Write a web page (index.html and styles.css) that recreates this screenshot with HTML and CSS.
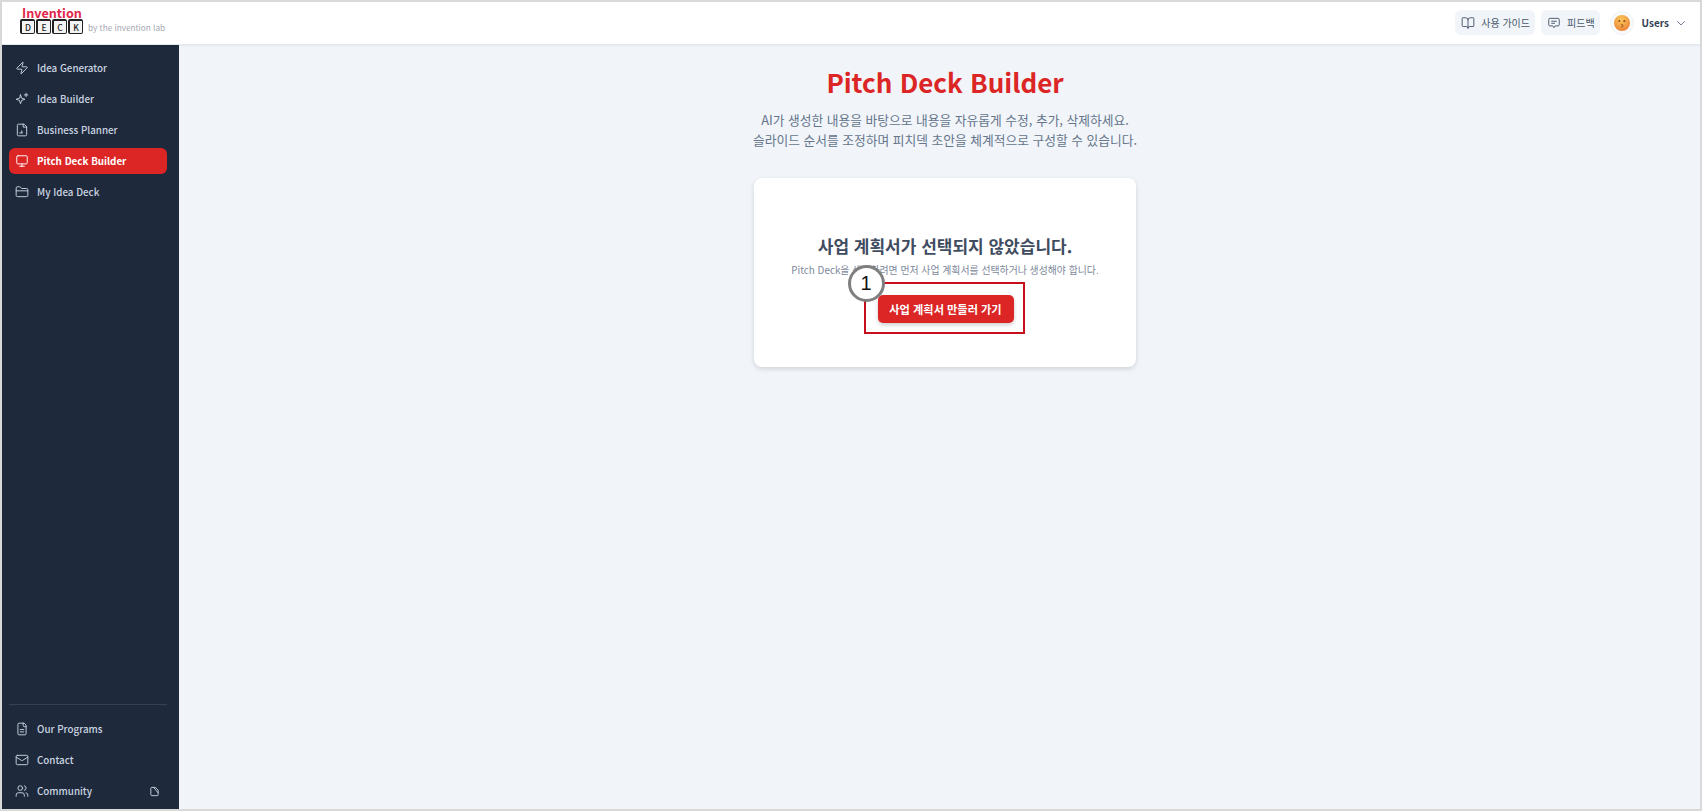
FILE: index.html
```html
<!DOCTYPE html>
<html lang="ko">
<head>
    <meta charset="UTF-8">
    <meta name="viewport" content="width=device-width, initial-scale=1.0">
    <title>Pitch Deck Builder</title>
    <link rel="stylesheet" href="styles.css">
</head>
<body>
    <div class="frame">
        <header class="topbar">
            <div class="logo">
                <div class="logo-name">Invention</div>
                <div class="logo-row">
                    <div class="logo-keys">
                        <span class="key">D</span><span class="key">E</span><span class="key">C</span><span class="key">K</span>
                    </div>
                    <span class="logo-by">by the invention lab</span>
                </div>
            </div>
            <div class="top-actions">
                <a class="top-btn">
                    <svg class="top-icon" viewBox="0 0 24 24"><path d="M12 7v14"/><path d="M3 18a1 1 0 0 1-1-1V4a1 1 0 0 1 1-1h5a4 4 0 0 1 4 4 4 4 0 0 1 4-4h5a1 1 0 0 1 1 1v13a1 1 0 0 1-1 1h-6a3 3 0 0 0-3 3 3 3 0 0 0-3-3z"/></svg>
                    사용 가이드
                </a>
                <a class="top-btn">
                    <svg class="top-icon" viewBox="0 0 24 24"><path d="M21 15a2 2 0 0 1-2 2h-5l-2 3-2-3H5a2 2 0 0 1-2-2V6a2 2 0 0 1 2-2h14a2 2 0 0 1 2 2z"/><path d="M8 9h8"/><path d="M8 12.5h5"/></svg>
                    피드백
                </a>
                <div class="user">
                    <div class="avatar">
                        <svg class="avatar-face" viewBox="0 0 24 24">
                            <defs>
                                <radialGradient id="face" cx="45%" cy="30%" r="75%">
                                    <stop offset="0" stop-color="#fcc95a"/>
                                    <stop offset="1" stop-color="#ea7f35"/>
                                </radialGradient>
                            </defs>
                            <circle cx="12" cy="12" r="12" fill="url(#face)"/>
                            <circle cx="8" cy="9" r="1.6" fill="#8a4a1c"/>
                            <circle cx="15.5" cy="9" r="1.6" fill="#8a4a1c"/>
                            <path d="M11 14c2 0 3 1 2 2 1 1 0 2-2 2" fill="none" stroke="#8a4a1c" stroke-width="1.5"/>
                        </svg>
                    </div>
                    <span class="user-name">Users</span>
                    <svg class="chevron" viewBox="0 0 24 24"><path d="m5 9 7 7 7-7"/></svg>
                </div>
            </div>
        </header>

        <div class="body-row">
            <aside class="sidebar">
                <nav class="nav">
                    <a class="nav-item">
                        <svg class="nav-icon" viewBox="0 0 24 24"><path d="M4 14a1 1 0 0 1-.78-1.63l9.9-10.2a.5.5 0 0 1 .86.46l-1.92 6.02A1 1 0 0 0 13 10h7a1 1 0 0 1 .78 1.63l-9.9 10.2a.5.5 0 0 1-.86-.46l1.92-6.02A1 1 0 0 0 11 14z"/></svg>
                        Idea Generator
                    </a>
                    <a class="nav-item">
                        <svg class="nav-icon" viewBox="0 0 24 24"><path d="M9.5 5l1.9 5.6 5.6 1.9-5.6 1.9-1.9 5.6-1.9-5.6L2 12.5l5.6-1.9z"/><path d="M19 2v6"/><path d="M16 5h6"/></svg>
                        Idea Builder
                    </a>
                    <a class="nav-item">
                        <svg class="nav-icon" viewBox="0 0 24 24"><path d="M15 2H6a2 2 0 0 0-2 2v16a2 2 0 0 0 2 2h12a2 2 0 0 0 2-2V7z"/><path d="M14 2v5h6"/><path d="M8 17h4"/><path d="M12 17v-3h-1"/></svg>
                        Business Planner
                    </a>
                    <a class="nav-item active">
                        <svg class="nav-icon" viewBox="0 0 24 24"><rect x="3" y="3" width="18" height="14" rx="2"/><path d="M8 21h8"/><path d="M12 17v4"/></svg>
                        Pitch Deck Builder
                    </a>
                    <a class="nav-item">
                        <svg class="nav-icon" viewBox="0 0 24 24"><path d="M20 20a2 2 0 0 0 2-2V8a2 2 0 0 0-2-2h-7.9a2 2 0 0 1-1.69-.9L9.6 3.9A2 2 0 0 0 7.93 3H4a2 2 0 0 0-2 2v13a2 2 0 0 0 2 2z"/><path d="M2 10h20"/></svg>
                        My Idea Deck
                    </a>
                </nav>
                <div class="nav-bottom">
                    <a class="nav-item">
                        <svg class="nav-icon" viewBox="0 0 24 24"><path d="M15 2H7a2 2 0 0 0-2 2v16a2 2 0 0 0 2 2h10a2 2 0 0 0 2-2V6z"/><path d="M14 2v4a2 2 0 0 0 2 2h3"/><path d="M9 13h6"/><path d="M9 17h6"/></svg>
                        Our Programs
                    </a>
                    <a class="nav-item">
                        <svg class="nav-icon" viewBox="0 0 24 24"><rect x="2" y="4" width="20" height="16" rx="2"/><path d="m22 7-8.97 5.7a1.94 1.94 0 0 1-2.06 0L2 7"/></svg>
                        Contact
                    </a>
                    <a class="nav-item">
                        <svg class="nav-icon" viewBox="0 0 24 24"><path d="M16 21v-2a4 4 0 0 0-4-4H6a4 4 0 0 0-4 4v2"/><circle cx="9" cy="7" r="4"/><path d="M22 21v-2a4 4 0 0 0-3-3.87"/><path d="M16 3.13a4 4 0 0 1 0 7.75"/></svg>
                        Community
                        <svg class="nav-extra" viewBox="0 0 24 24"><path d="M14 3H6a2 2 0 0 0-2 2v14a2 2 0 0 0 2 2h12a2 2 0 0 0 2-2V9z"/><path d="M10 3l10 12"/></svg>
                    </a>
                </div>
            </aside>

            <main class="content">
                <h1 class="page-title">Pitch Deck Builder</h1>
                <p class="page-desc">AI가 생성한 내용을 바탕으로 내용을 자유롭게 수정, 추가, 삭제하세요.<br>슬라이드 순서를 조정하며 피치덱 초안을 체계적으로 구성할 수 있습니다.</p>
                <section class="card">
                    <h2 class="card-title">사업 계획서가 선택되지 않았습니다.</h2>
                    <p class="card-text">Pitch Deck을 생성하려면 먼저 사업 계획서를 선택하거나 생성해야 합니다.</p>
                    <div class="callout">
                        <a class="primary-btn">사업 계획서 만들러 가기</a>
                        <span class="step-badge">1</span>
                    </div>
                </section>
            </main>
        </div>
    </div>
</body>
</html>
```

FILE: styles.css
```css
html, body {
    height: 100%;
}

body {
    margin: 0;
    font-family: 'Noto Sans CJK KR', 'Noto Sans', sans-serif;
    background-color: #fff;
    overflow: hidden;
}

a {
    text-decoration: none;
}

.frame {
    height: 100%;
    box-sizing: border-box;
    border: 2px solid #d9d9d9;
    display: flex;
    flex-direction: column;
}

/* top bar */
.topbar {
    height: 43px;
    flex-shrink: 0;
    box-sizing: border-box;
    background: #fff;
    border-bottom: 1px solid #e2e8f0;
    box-shadow: 0 1px 2px rgba(0, 0, 0, 0.05);
    display: flex;
    align-items: flex-start;
    justify-content: space-between;
    padding: 4px 13px 0 18px;
    position: relative;
    z-index: 1;
}

.logo-name {
    color: #e0244a;
    font-size: 12.6px;
    font-weight: 700;
    line-height: 13px;
    margin-left: 2px;
}

.logo-row {
    display: flex;
    align-items: flex-end;
    gap: 5px;
}

.logo-keys {
    display: flex;
    gap: 1px;
}

.key {
    width: 12px;
    height: 12px;
    border: 1px solid #222;
    border-top-width: 2px;
    border-left-width: 2px;
    border-radius: 2px;
    background: #f4f4f4;
    color: #222;
    font-size: 8.5px;
    font-weight: 500;
    line-height: 12px;
    text-align: center;
}

.logo-by {
    color: #a3a8b0;
    font-size: 8.2px;
    line-height: 13px;
}

.top-actions {
    display: flex;
    align-items: center;
    gap: 6px;
    margin-top: 4px;
}

.top-btn {
    height: 25px;
    padding: 0 5px 0 6px;
    display: flex;
    align-items: center;
    gap: 6px;
    background: #f1f5f9;
    border-radius: 6px;
    color: #475569;
    font-size: 10px;
}

.top-icon {
    width: 14px;
    height: 14px;
    fill: none;
    stroke: #475569;
    stroke-width: 1.6;
    stroke-linecap: round;
    stroke-linejoin: round;
}

.user {
    display: flex;
    align-items: center;
    margin-left: 4px;
}

.avatar {
    width: 24px;
    height: 24px;
    border-radius: 50%;
    background: #f8fafc;
    border: 1px solid #eef1f5;
    box-sizing: border-box;
    display: flex;
    align-items: center;
    justify-content: center;
}

.avatar-face {
    width: 16px;
    height: 16px;
}

.user-name {
    color: #334155;
    font-size: 10px;
    font-weight: 700;
    margin-left: 8px;
}

.chevron {
    width: 12px;
    height: 12px;
    margin-left: 6px;
    fill: none;
    stroke: #64748b;
    stroke-width: 1.8;
    stroke-linecap: round;
    stroke-linejoin: round;
}

/* sidebar */
.body-row {
    flex: 1;
    min-height: 0;
    display: flex;
}

.sidebar {
    width: 177px;
    flex-shrink: 0;
    background-color: #1e293b;
    padding: 10px 12px 5px 7px;
    box-sizing: border-box;
    display: flex;
    flex-direction: column;
    justify-content: space-between;
}

.nav {
    display: flex;
    flex-direction: column;
    gap: 5px;
}

.nav-bottom {
    display: flex;
    flex-direction: column;
    gap: 5px;
    border-top: 1px solid #334155;
    padding-top: 11px;
}

.nav-item {
    height: 26px;
    border-radius: 6px;
    padding: 0 6px;
    display: flex;
    align-items: center;
    gap: 8px;
    color: #cbd5e1;
    font-size: 9.8px;
    font-weight: 500;
}

.nav-item.active {
    background-color: #dc2626;
    color: #fff;
    font-weight: 700;
}

.nav-icon {
    width: 14px;
    height: 14px;
    flex-shrink: 0;
    fill: none;
    stroke: currentColor;
    stroke-width: 1.6;
    stroke-linecap: round;
    stroke-linejoin: round;
}

.nav-extra {
    width: 11px;
    height: 11px;
    margin-left: auto;
    margin-right: 1px;
    fill: none;
    stroke: #cbd5e1;
    stroke-width: 2;
    stroke-linejoin: round;
}

/* main */
.content {
    flex: 1;
    background-color: #f1f5f9;
    display: flex;
    flex-direction: column;
    align-items: center;
    padding-top: 17px;
    padding-left: 11px;
}

.page-title {
    margin: 0;
    color: #dc2626;
    font-size: 26px;
    font-weight: 700;
    line-height: 40px;
}

.page-desc {
    margin: 8px 0 0;
    color: #64748b;
    font-size: 12.75px;
    line-height: 20px;
    text-align: center;
}

.card {
    width: 382px;
    height: 189px;
    margin-top: 28px;
    background: #fff;
    border-radius: 8px;
    box-shadow: 0 2px 5px rgba(0, 0, 0, 0.14);
    box-sizing: border-box;
    padding-top: 54px;
    display: flex;
    flex-direction: column;
    align-items: center;
}

.card-title {
    margin: 0;
    color: #3f4c5f;
    font-size: 17px;
    font-weight: 700;
    line-height: 28px;
}

.card-text {
    margin: 2px 0 0;
    color: #7c8899;
    font-size: 9.9px;
    line-height: 16px;
}

.callout {
    margin: 4px 0 0 -2px;
    padding: 11px 9px 9px 12px;
    border: 2px solid #c80f1e;
    position: relative;
}

.primary-btn {
    display: block;
    width: 136px;
    height: 28px;
    background-color: #dc2626;
    border-radius: 5px;
    box-shadow: 0 2px 4px rgba(0, 0, 0, 0.2);
    color: #fff;
    font-size: 11.2px;
    font-weight: 700;
    line-height: 28px;
    text-align: center;
}

.step-badge {
    position: absolute;
    left: -18px;
    top: -19px;
    width: 31px;
    height: 31px;
    border: 3px solid #7f7f7f;
    border-radius: 50%;
    background: #fff;
    color: #111;
    font-family: 'Liberation Sans', sans-serif;
    font-size: 20px;
    line-height: 31px;
    text-align: center;
}
```
